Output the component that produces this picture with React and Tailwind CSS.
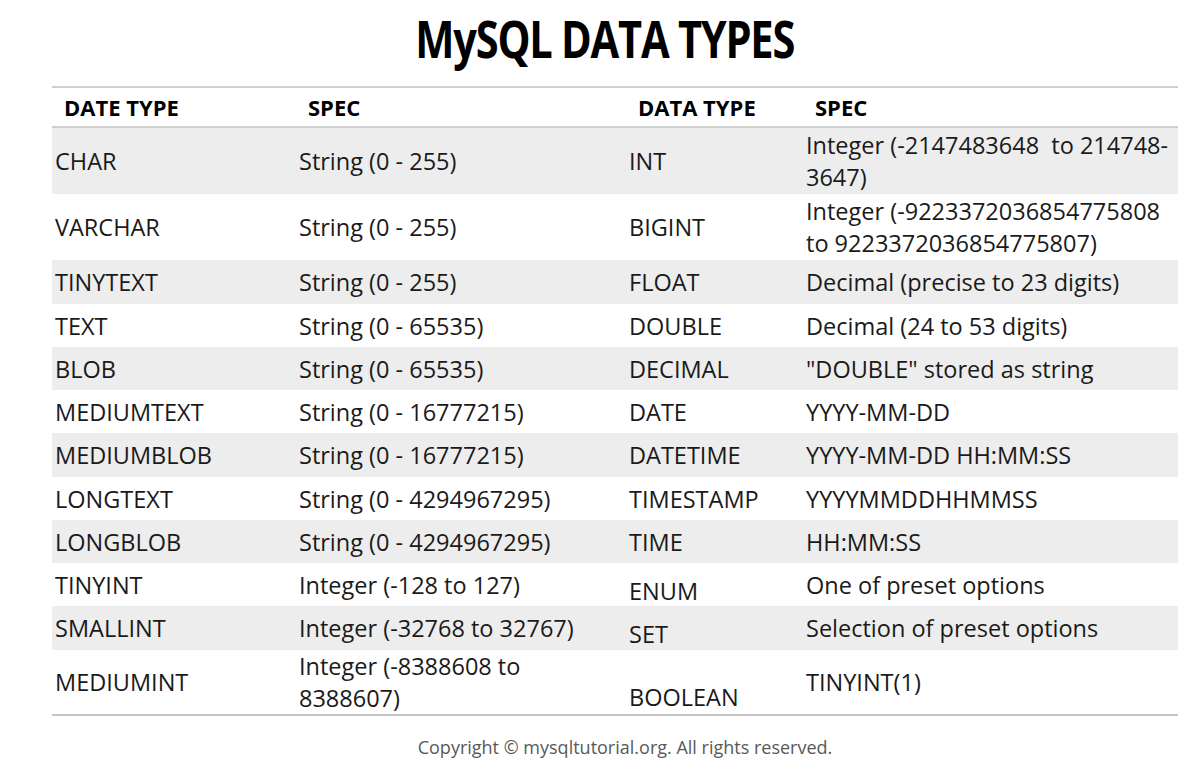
const rows = [
  { a: "CHAR", b: "String (0 - 255)", c: "INT", d: ["Integer (-2147483648  to 214748-", "3647)"], h: "h-[66px]", bg: true },
  { a: "VARCHAR", b: "String (0 - 255)", c: "BIGINT", d: ["Integer (-9223372036854775808", "to 9223372036854775807)"], h: "h-[66px]" },
  { a: "TINYTEXT", b: "String (0 - 255)", c: "FLOAT", d: ["Decimal (precise to 23 digits)"], h: "h-[44px]", bg: true },
  { a: "TEXT", b: "String (0 - 65535)", c: "DOUBLE", d: ["Decimal (24 to 53 digits)"], h: "h-[43px]" },
  { a: "BLOB", b: "String (0 - 65535)", c: "DECIMAL", d: ['"DOUBLE" stored as string'], h: "h-[43px]", bg: true },
  { a: "MEDIUMTEXT", b: "String (0 - 16777215)", c: "DATE", d: ["YYYY-MM-DD"], h: "h-[43px]" },
  { a: "MEDIUMBLOB", b: "String (0 - 16777215)", c: "DATETIME", d: ["YYYY-MM-DD HH:MM:SS"], h: "h-[44px]", bg: true },
  { a: "LONGTEXT", b: "String (0 - 4294967295)", c: "TIMESTAMP", d: ["YYYYMMDDHHMMSS"], h: "h-[43px]" },
  { a: "LONGBLOB", b: "String (0 - 4294967295)", c: "TIME", d: ["HH:MM:SS"], h: "h-[43px]", bg: true },
  { a: "TINYINT", b: "Integer (-128 to 127)", c: "ENUM", d: ["One of preset options"], h: "h-[43px]", low: true },
  { a: "SMALLINT", b: "Integer (-32768 to 32767)", c: "SET", d: ["Selection of preset options"], h: "h-[44px]", bg: true, low: true },
  { a: "MEDIUMINT", b: ["Integer (-8388608 to", "8388607)"], c: "BOOLEAN", d: ["TINYINT(1)"], h: "h-[66px]", bottom: true },
];

function Lines({ value }) {
  const list = Array.isArray(value) ? value : [value];
  return (
    <div className="leading-[32px] whitespace-pre">
      {list.map((l, i) => (
        <div key={i}>{l}</div>
      ))}
    </div>
  );
}

export default function App() {
  return (
    <div
      className="w-[1200px] h-[776px] bg-white text-[#1a1a1a] overflow-hidden"
      style={{ fontFamily: '"Open Sans", "Noto Sans", sans-serif' }}
    >
      <div className="h-[86px] flex justify-center pt-[8px] pl-[10px]">
        <h1 className="text-[52px] leading-[60px] font-bold tracking-[-0.03em] text-black scale-x-[0.8] whitespace-nowrap">
          MySQL DATA TYPES
        </h1>
      </div>

      <div className="ml-[52px] w-[1126px]">
        <div className="h-[42px] flex items-center border-t-2 border-b-2 border-[#cfcfcf] text-[22px] font-bold text-black">
          <div className="w-[244px] pl-[12px]">DATE TYPE</div>
          <div className="w-[330px] pl-[12px]">SPEC</div>
          <div className="w-[177px] pl-[12px]">DATA TYPE</div>
          <div className="flex-1 pl-[12px]">SPEC</div>
        </div>

        {rows.map((r) => (
          <div
            key={r.a}
            className={`flex text-[23.5px] ${r.h} ${r.bg ? "bg-[#ededed]" : "bg-white"} ${r.bottom ? "border-b-2 border-[#c4c4c4]" : ""}`}
          >
            <div className="w-[244px] pl-[3px] flex items-center">
              <Lines value={r.a} />
            </div>
            <div className="w-[330px] pl-[3px] flex items-center">
              <Lines value={r.b} />
            </div>
            <div
              className={`w-[177px] pl-[3px] flex ${r.bottom ? "items-end pb-[1px]" : "items-center"} ${r.low ? "pt-[12px]" : ""}`}
            >
              <Lines value={r.c} />
            </div>
            <div className="flex-1 pl-[3px] flex items-center">
              <Lines value={r.d} />
            </div>
          </div>
        ))}
      </div>

      <div className="mt-[18px] pl-[50px] text-center text-[18px] text-[#595959]">
        Copyright © mysqltutorial.org. All rights reserved.
      </div>
    </div>
  );
}
